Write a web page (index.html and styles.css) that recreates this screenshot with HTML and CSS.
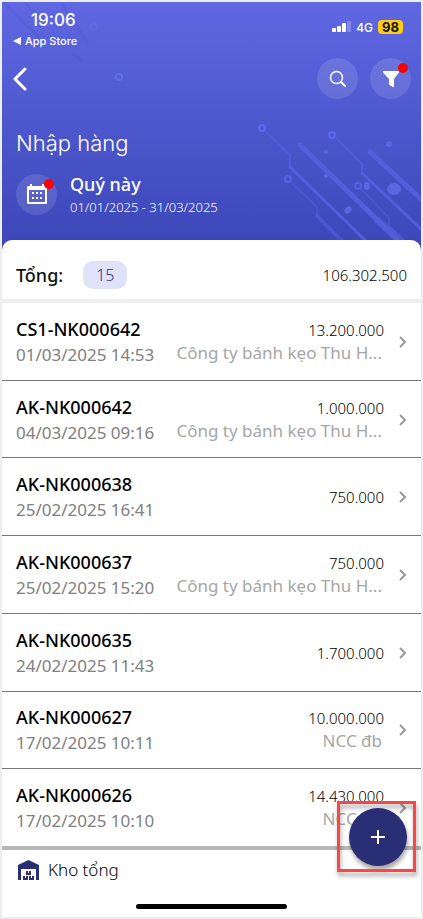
FILE: index.html
```html
<!DOCTYPE html>
<html lang="vi">
<head>
<meta charset="utf-8">
<meta name="viewport" content="width=device-width, initial-scale=1">
<title>Nhập hàng</title>
<link rel="stylesheet" href="styles.css">
</head>
<body>
<div class="app">
  <header class="hero">
    <svg class="pattern pattern-left" width="130" height="90" viewBox="0 0 130 90" fill="none" aria-hidden="true">
      <g stroke="#5055c8" stroke-opacity=".3" stroke-width="3" stroke-linecap="round">
        <path d="M2 2l34 32M24 2l20 18M60 2l25 38M72 52l8 7"/>
      </g>
      <circle cx="92" cy="25" r="3" stroke="#6970ec" stroke-opacity=".4" stroke-width="2"/>
      <circle cx="117" cy="75" r="3" stroke="#6670ee" stroke-opacity=".7" stroke-width="2"/>
    </svg>
    <svg class="pattern pattern-right" width="163" height="118" viewBox="0 0 163 118" fill="none" aria-hidden="true">
      <g stroke="#545edb" stroke-linejoin="round" stroke-linecap="round">
        <path stroke-width="2" stroke-opacity=".8" d="M8 10l24 23v12M78 16l26 26v9"/>
        <path stroke-width="3" d="M32 45l75 73M104 51l60 57"/>
        <path stroke-width="2" stroke-opacity=".5" d="M34 61l25 24v9M104 68l27 28v8l14 14"/>
        <path stroke-width="4" stroke-opacity=".6" d="M59 94l24 24"/>
        <path stroke-width="5" d="M42 23l98 95M112 30l52 48"/>
        <path stroke-width="8" stroke-opacity=".5" d="M120 99l22 19"/>
      </g>
      <g stroke="#5b6af0" stroke-width="2">
        <circle cx="4" cy="6" r="3"/><circle cx="74" cy="13" r="3"/>
        <circle cx="30" cy="57" r="3" stroke-opacity=".7"/><circle cx="100" cy="64" r="3" stroke-opacity=".7"/>
      </g>
      <g fill="#5c66e0">
        <ellipse cx="136" cy="67" rx="7" ry="6"/><circle cx="131" cy="22" r="3"/>
        <circle cx="68" cy="30" r="2"/><circle cx="68" cy="54" r="2"/>
        <ellipse cx="109" cy="64" rx="3" ry="4"/><ellipse cx="90" cy="88" rx="3" ry="4" transform="rotate(35 90 88)"/>
      </g>
    </svg>
    <div class="status">
      <div class="status-left">
        <span class="clock">19:06</span>
        <a class="return" href="#"><svg width="8" height="8" viewBox="0 0 8 8" aria-hidden="true"><path d="M8 0v8L0 4z" fill="#fff"/></svg>App Store</a>
      </div>
      <div class="status-right">
        <svg width="19" height="12" viewBox="0 0 19 12" fill="#fff" aria-hidden="true"><rect y="7" width="4" height="4" rx="1"/><rect x="5" y="5" width="4" height="6" rx="1"/><rect x="10" y="2" width="4" height="9" rx="1"/><rect x="15" width="4" height="11" rx="1" opacity=".25"/></svg>
        <span>4G</span>
        <span class="battery">98</span>
      </div>
    </div>
    <nav class="toolbar">
      <button class="back" aria-label="Quay lại"><svg width="14" height="24" viewBox="0 0 14 24" fill="none" stroke="#fff" stroke-width="3" stroke-linecap="round" stroke-linejoin="round"><path d="M12 2L2 12l10 10"/></svg></button>
      <button class="round" aria-label="Tìm kiếm"><svg width="18" height="18" viewBox="0 0 18 18" fill="none" stroke="#fff" stroke-linecap="round"><circle cx="7.500" cy="7.500" r="6" stroke-width="1.500"/><path stroke-width="2" d="M12 12l4 4"/></svg></button>
      <button class="round dot" aria-label="Bộ lọc"><svg width="18" height="18" viewBox="0 0 18 18" fill="#fff"><path d="M1.500 1h15q1 0 .5 1.500L12 9v7.500q-.3 1-1.200.5L7 14.500V9L1 2.500Q.5 1 1.500 1z"/></svg></button>
    </nav>
    <h1>Nhập hàng</h1>
    <div class="period">
      <button class="round dot" aria-label="Chọn kỳ"><svg width="22" height="22" viewBox="0 0 22 22" fill="#fff"><path fill-rule="evenodd" d="M2 3h2V1h2v2h10V1h2v2h2q1 0 1 1v16q0 1-1 1H2q-1 0-1-1V4q0-1 1-1zm1 4v12h16V7z"/><path d="M6 9h2v2H6zM10 9h2v2h-2zM14 9h2v2h-2zM6 14h2v2H6zM10 14h2v2h-2zM14 14h2v2h-2z"/></svg></button>
      <div>
        <div class="period-name">Quý này</div>
        <div class="period-range">01/01/2025 - 31/03/2025</div>
      </div>
    </div>
  </header>

  <main class="sheet">
    <section class="summary">
      <h2>Tổng:</h2><span class="count">15</span><span class="total">106.302.500</span>
    </section>
    <ul class="list">
      <li><a class="row" href="#"><div class="doc"><b>CS1-NK000642</b><time>01/03/2025 14:53</time></div><div class="side"><span class="amount">13.200.000</span><span class="vendor">Công ty bánh kẹo Thu H...</span></div><svg class="chevron" viewBox="0 0 8 12"><path d="M1 1l5 5-5 5"/></svg></a></li>
      <li><a class="row" href="#"><div class="doc"><b>AK-NK000642</b><time>04/03/2025 09:16</time></div><div class="side"><span class="amount">1.000.000</span><span class="vendor">Công ty bánh kẹo Thu H...</span></div><svg class="chevron" viewBox="0 0 8 12"><path d="M1 1l5 5-5 5"/></svg></a></li>
      <li><a class="row" href="#"><div class="doc"><b>AK-NK000638</b><time>25/02/2025 16:41</time></div><div class="side"><span class="amount">750.000</span></div><svg class="chevron" viewBox="0 0 8 12"><path d="M1 1l5 5-5 5"/></svg></a></li>
      <li><a class="row" href="#"><div class="doc"><b>AK-NK000637</b><time>25/02/2025 15:20</time></div><div class="side"><span class="amount">750.000</span><span class="vendor">Công ty bánh kẹo Thu H...</span></div><svg class="chevron" viewBox="0 0 8 12"><path d="M1 1l5 5-5 5"/></svg></a></li>
      <li><a class="row" href="#"><div class="doc"><b>AK-NK000635</b><time>24/02/2025 11:43</time></div><div class="side"><span class="amount">1.700.000</span></div><svg class="chevron" viewBox="0 0 8 12"><path d="M1 1l5 5-5 5"/></svg></a></li>
      <li><a class="row" href="#"><div class="doc"><b>AK-NK000627</b><time>17/02/2025 10:11</time></div><div class="side"><span class="amount">10.000.000</span><span class="vendor">NCC đb</span></div><svg class="chevron" viewBox="0 0 8 12"><path d="M1 1l5 5-5 5"/></svg></a></li>
      <li><a class="row" href="#"><div class="doc"><b>AK-NK000626</b><time>17/02/2025 10:10</time></div><div class="side"><span class="amount">14.430.000</span><span class="vendor">NCC đb</span></div><svg class="chevron" viewBox="0 0 8 12"><path d="M1 1l5 5-5 5"/></svg></a></li>
    </ul>
  </main>

  <footer class="footer">
    <button class="store"><svg width="21" height="20" viewBox="0 0 21 20" fill="#2a2e75" aria-hidden="true"><path fill-rule="evenodd" d="M10.500 0L21 5v15h-3V9H3v11H0V5z"/><path d="M8 11h2v2h1v-2h2v4H8zM5 16h2v2h1v-2h2v4H5zM11 16h2v2h1v-2h2v4h-5z"/></svg>Kho tổng</button>
    <div class="home-bar"></div>
  </footer>

  <div class="highlight">
    <button class="fab" aria-label="Thêm"><svg width="14" height="14" viewBox="0 0 14 14" stroke="#fff" stroke-width="2"><path d="M7 0v14M0 7h14"/></svg></button>
  </div>
</div>
</body>
</html>
```
FILE: styles.css
```css
* { box-sizing: border-box; }
body { margin: 0; background: #eee; font-family: "Noto Sans", sans-serif; color: #111; }
button { border: 0; padding: 0; background: none; color: inherit; font: inherit; cursor: pointer; }
a { color: inherit; text-decoration: none; }
svg { display: block; flex: none; }
h1, h2 { margin: 0; }

.app { position: relative; min-height: 100vh; padding: 2px; display: flex; flex-direction: column; }

.hero {
  position: relative;
  padding: 8px 10px 33px 14px;
  margin-bottom: -10px;
  background: linear-gradient(#5f68e2, #3b46b8);
  color: #fff;
}
.hero > * { position: relative; }
.hero > .pattern { position: absolute; }
.pattern-left { left: 0; top: 0; }
.pattern-right { right: 0; bottom: 10px; }

.status { display: flex; justify-content: space-between; font-family: Inter, sans-serif; }
.status-left { display: flex; flex-direction: column; margin-left: -3px; }
.clock { padding-left: 18px; font-size: 17px; line-height: 20px; font-weight: 500; }
.return { display: flex; align-items: center; gap: 4px; margin-top: 2px; font-size: 11px; line-height: 18px; font-weight: 500; }
.status-right { display: flex; align-items: center; gap: 5px; height: 34px; padding-right: 8px; font-size: 12px; font-weight: 500; }
.battery { padding: 0 4px; border-radius: 4px; background: #fc1; color: #111; font-size: 13px; line-height: 14px; font-weight: 700; }

.toolbar { display: flex; align-items: center; gap: 12px; margin-top: 8px; }
.back { margin: 0 auto 0 -3px; }
.round {
  position: relative; flex: none; width: 41px; height: 41px; border-radius: 50%;
  display: flex; align-items: center; justify-content: center;
  background: rgba(255, 255, 255, .12);
}
.dot::after { content: ""; position: absolute; top: 5px; right: 3px; width: 10px; height: 10px; border-radius: 50%; background: red; }

h1 { margin-top: 28px; font: 300 22px/32px Inter, sans-serif; }
.period { display: flex; align-items: center; gap: 13px; margin-top: 12px; }
.period-name { font-size: 18px; line-height: 26px; font-weight: 500; }
.period-range { font-size: 13px; line-height: 20px; font-weight: 300; }

.sheet { position: relative; flex: 1; display: flex; flex-direction: column; border-radius: 10px 10px 0 0; background: #fff; }
.summary { display: flex; align-items: center; height: 63px; padding: 10px 14px 0; border-bottom: 4px solid #eee; }
.summary h2 { font-size: 18px; font-weight: 500; }
.count { margin-left: 20px; padding: 0 13px; border-radius: 10px; background: #e0e2fa; color: #2f3480; font-size: 16px; line-height: 28px; font-weight: 300; }
.total { margin-left: auto; }
.total, .amount { font-size: 15px; line-height: 22px; font-weight: 300; color: #000; }

.list { flex: 1; display: flex; flex-direction: column; margin: 0; padding: 0; list-style: none; }
.list li { flex: 1; display: flex; }
.list li + li { border-top: 1px solid #777; }
.row { flex: 1; display: flex; align-items: center; padding: 1px 14px 0; }
.doc, .side { display: flex; flex-direction: column; }
.doc b { font-size: 18px; line-height: 26px; font-weight: 500; color: #000; }
.doc time { font-size: 17px; line-height: 26px; font-weight: 400; color: #808080; }
.side { flex: 1; align-items: flex-end; white-space: nowrap; }
.vendor { padding-right: 2px; font-size: 17px; line-height: 24px; font-weight: 400; color: #a6a6a6; }
.chevron { width: 8px; height: 12px; margin-left: 15px; fill: none; stroke: #999; stroke-width: 2; }

.footer { padding: 7px 14px 8px; border-top: 4px solid #b8b8b8; background: #fff; }
.store { display: flex; align-items: center; gap: 9px; padding-left: 2px; font-size: 17px; line-height: 26px; font-weight: 300; color: #000; }
.home-bar { width: 151px; height: 5px; margin: 21px auto 0; border-radius: 3px; background: #000; }

.highlight {
  position: absolute; right: 7px; bottom: 47px; width: 79px; height: 71px;
  display: flex; align-items: center; justify-content: center; padding-left: 2px;
  border: 3px solid #fa4646; filter: drop-shadow(1px 4px 2px rgba(0, 0, 0, .35));
}
.fab { display: flex; align-items: center; justify-content: center; width: 58px; height: 58px; border-radius: 50%; background: #2a2e75; }
```
